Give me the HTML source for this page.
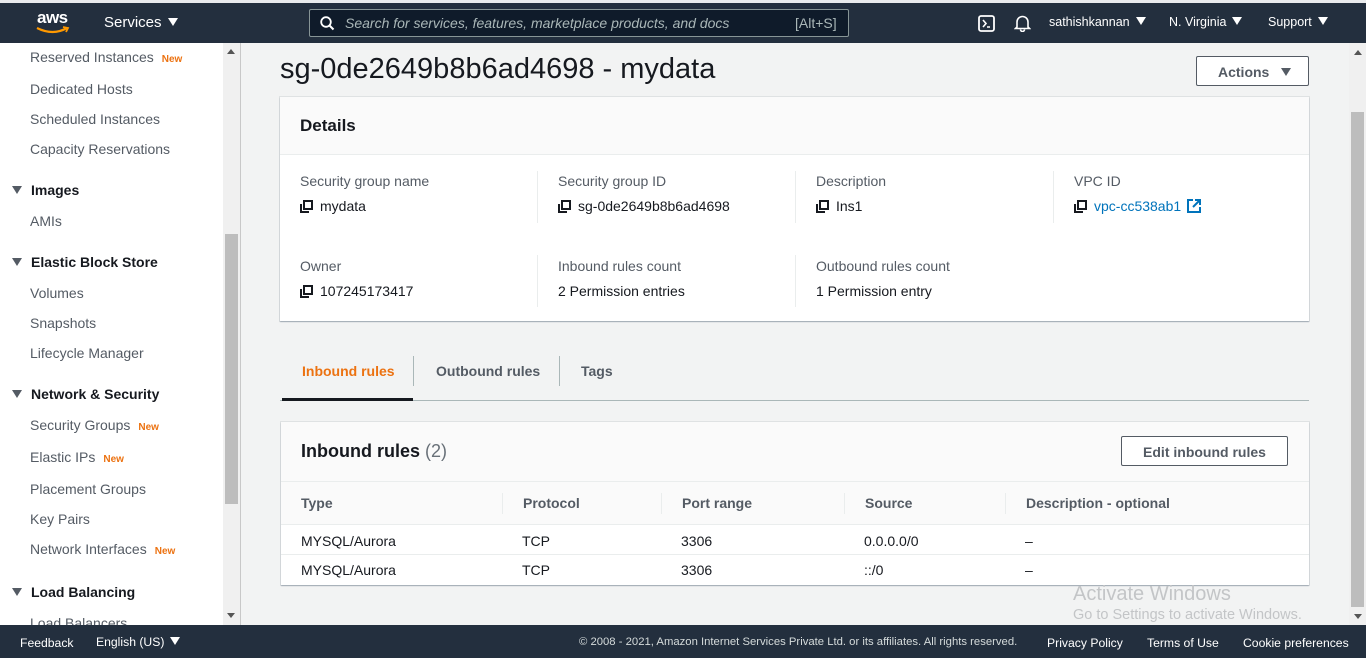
<!DOCTYPE html>
<html><head><meta charset="utf-8"><style>
*{margin:0;padding:0;box-sizing:border-box}
body{width:1366px;height:658px;overflow:hidden;background:#f2f3f3;font-family:"Liberation Sans",sans-serif;color:#16191f;position:relative;font-size:14px}
.a{position:absolute;white-space:nowrap}
.nav{left:0;top:3px;width:1366px;height:40px;background:#232f3e;color:#fff}
.top{left:0;top:0;width:1366px;height:3px;background:#e9ebed}
.side{left:0;top:43px;width:223px;height:582px;background:#fff;overflow:hidden}
.si{position:absolute;left:30px;color:#545b64;font-size:14px}
.sh{position:absolute;left:12px;font-weight:bold;color:#16191f;font-size:14px}
.sh:before{content:"";display:inline-block;border-left:5px solid transparent;border-right:5px solid transparent;border-top:8px solid #545b64;margin-right:9px;vertical-align:1px}
.new{color:#ec7211;font-size:10px;font-weight:bold;margin-left:8px}
.foot{left:0;top:625px;width:1366px;height:33px;background:#232f3e;color:#fff;font-size:12.2px}
.card{background:#fff;box-shadow:0 1px 1px rgba(0,31,63,.3),0 0 0 1px rgba(0,28,36,.08)}
.lbl{color:#545b64;font-size:14px}
.cp{display:inline-block;width:13px;height:13px;vertical-align:-2px;margin-right:7px}
.th{font-weight:bold;color:#545b64;font-size:14px}
.tri{display:inline-block;border-left:5px solid transparent;border-right:5px solid transparent;border-top:8px solid #fff;margin-left:6px;vertical-align:1px}
</style></head><body>
<div class="a top"></div>
<div class="a nav">
 <div class="a" style="left:37px;top:5px;font-size:17px;font-weight:bold;letter-spacing:-.5px">aws</div>
 <svg class="a" style="left:36px;top:23px" width="34" height="9" viewBox="0 0 34 9"><path d="M1 2Q17 10 31 2" stroke="#ff9900" stroke-width="2.2" fill="none"/><path d="M27 1L32 2L30 6" stroke="#ff9900" stroke-width="1.8" fill="none"/></svg>
 <div class="a" style="left:104px;top:11px;font-size:15px">Services<span class="tri"></span></div>
 <div class="a" style="left:309px;top:6px;width:540px;height:28px;border:1px solid #879596;border-radius:2px;background:#0f1b2a"></div>
 <svg class="a" style="left:320px;top:13px" width="15" height="15" viewBox="0 0 15 15"><circle cx="6" cy="6" r="4.8" stroke="#fff" stroke-width="1.8" fill="none"/><path d="M9.5 9.5L13.5 13.5" stroke="#fff" stroke-width="2"/></svg>
 <div class="a" style="left:345px;top:12px;font-size:14px;font-style:italic;color:#aab7b8">Search for services, features, marketplace products, and docs</div>
 <div class="a" style="left:795px;top:12px;font-size:14px;color:#aab7b8">[Alt+S]</div>
 <svg class="a" style="left:978px;top:12px" width="17" height="17" viewBox="0 0 17 17"><rect x="1" y="1" width="15" height="15" rx="2" stroke="#fff" stroke-width="1.8" fill="none"/><path d="M5 5L8 8.5L5 12M9 12H12" stroke="#fff" stroke-width="1.6" fill="none"/></svg>
 <svg class="a" style="left:1014px;top:11px" width="17" height="18" viewBox="0 0 17 18"><path d="M3 13V8a5.5 5.5 0 0 1 11 0v5l1.5 1.5h-14Z M6.5 15.5a2 2 0 0 0 4 0" stroke="#fff" stroke-width="1.6" fill="none"/></svg>
 <div class="a" style="left:1049px;top:12px;font-size:12.5px">sathishkannan<span class="tri"></span></div>
 <div class="a" style="left:1169px;top:12px;font-size:12.5px">N. Virginia<span class="tri"></span></div>
 <div class="a" style="left:1268px;top:12px;font-size:12.5px">Support<span class="tri"></span></div>
</div>

<div class="a side">
 <div class="si" style="top:6px">Reserved Instances<span class="new">New</span></div>
 <div class="si" style="top:38px">Dedicated Hosts</div>
 <div class="si" style="top:68px">Scheduled Instances</div>
 <div class="si" style="top:98px">Capacity Reservations</div>
 <div class="sh" style="top:139px">Images</div>
 <div class="si" style="top:170px">AMIs</div>
 <div class="sh" style="top:211px">Elastic Block Store</div>
 <div class="si" style="top:242px">Volumes</div>
 <div class="si" style="top:272px">Snapshots</div>
 <div class="si" style="top:302px">Lifecycle Manager</div>
 <div class="sh" style="top:343px">Network &amp; Security</div>
 <div class="si" style="top:374px">Security Groups<span class="new">New</span></div>
 <div class="si" style="top:406px">Elastic IPs<span class="new">New</span></div>
 <div class="si" style="top:438px">Placement Groups</div>
 <div class="si" style="top:468px">Key Pairs</div>
 <div class="si" style="top:498px">Network Interfaces<span class="new">New</span></div>
 <div class="sh" style="top:541px">Load Balancing</div>
 <div class="si" style="top:572px">Load Balancers</div>
</div>
<div class="a" style="left:223px;top:43px;width:17px;height:582px;background:#f0f0f0"></div>
<div class="a" style="left:225px;top:234px;width:13px;height:270px;background:#bdbdbd"></div>
<div class="a" style="left:227px;top:49px;border-left:4px solid transparent;border-right:4px solid transparent;border-bottom:5px solid #555"></div>
<div class="a" style="left:227px;top:613px;border-left:4px solid transparent;border-right:4px solid transparent;border-top:5px solid #555"></div>
<div class="a" style="left:240px;top:43px;width:1px;height:582px;background:#c8c8c8"></div>

<div class="a" style="left:1349px;top:43px;width:17px;height:582px;background:#f0f0f0"></div>
<div class="a" style="left:1351px;top:112px;width:13px;height:495px;background:#bdbdbd"></div>
<div class="a" style="left:1354px;top:50px;border-left:4px solid transparent;border-right:4px solid transparent;border-bottom:5px solid #555"></div>
<div class="a" style="left:1354px;top:614px;border-left:4px solid transparent;border-right:4px solid transparent;border-top:5px solid #555"></div>

<div class="a" style="left:280px;top:53px;font-size:29px;color:#16191f">sg-0de2649b8b6ad4698 - mydata</div>
<div class="a" style="left:1196px;top:56px;width:113px;height:30px;border:1px solid #545b64;border-radius:2px;background:#fff;font-weight:bold;color:#545b64;font-size:14px;padding:7px 0 0 21px">Actions<span class="tri" style="border-top-color:#545b64;margin-left:12px"></span></div>

<div class="a card" style="left:280px;top:97px;width:1029px;height:224px">
 <div style="height:58px;background:#fafafa;border-bottom:1px solid #eaeded;padding:19px 20px;font-size:17px;font-weight:bold">Details</div>
 <div class="a" style="left:257px;top:74px;width:1px;height:52px;background:#eaeded"></div>
 <div class="a" style="left:515px;top:74px;width:1px;height:52px;background:#eaeded"></div>
 <div class="a" style="left:773px;top:74px;width:1px;height:52px;background:#eaeded"></div>
 <div class="a" style="left:257px;top:158px;width:1px;height:52px;background:#eaeded"></div>
 <div class="a" style="left:515px;top:158px;width:1px;height:52px;background:#eaeded"></div>
 <div class="a lbl" style="left:20px;top:76px">Security group name</div>
 <div class="a" style="left:20px;top:101px"><svg class="cp" viewBox="0 0 13 13"><path d="M4 1H12V9H4Z M1 4V12H9" stroke="#16191f" stroke-width="2" fill="none"/></svg>mydata</div>
 <div class="a lbl" style="left:278px;top:76px">Security group ID</div>
 <div class="a" style="left:278px;top:101px"><svg class="cp" viewBox="0 0 13 13"><path d="M4 1H12V9H4Z M1 4V12H9" stroke="#16191f" stroke-width="2" fill="none"/></svg>sg-0de2649b8b6ad4698</div>
 <div class="a lbl" style="left:536px;top:76px">Description</div>
 <div class="a" style="left:536px;top:101px"><svg class="cp" viewBox="0 0 13 13"><path d="M4 1H12V9H4Z M1 4V12H9" stroke="#16191f" stroke-width="2" fill="none"/></svg>Ins1</div>
 <div class="a lbl" style="left:794px;top:76px">VPC ID</div>
 <div class="a" style="left:794px;top:101px;color:#0073bb"><svg class="cp" viewBox="0 0 13 13"><path d="M4 1H12V9H4Z M1 4V12H9" stroke="#16191f" stroke-width="2" fill="none"/></svg>vpc-cc538ab1 <svg style="vertical-align:-2px;margin-left:2px" width="14" height="14" viewBox="0 0 14 14"><path d="M6 1H1V13H13V8" stroke="#0073bb" stroke-width="2" fill="none"/><path d="M8 1H13V6M13 1L6 8" stroke="#0073bb" stroke-width="2" fill="none"/></svg></div>
 <div class="a lbl" style="left:20px;top:161px">Owner</div>
 <div class="a" style="left:20px;top:186px"><svg class="cp" viewBox="0 0 13 13"><path d="M4 1H12V9H4Z M1 4V12H9" stroke="#16191f" stroke-width="2" fill="none"/></svg>107245173417</div>
 <div class="a lbl" style="left:278px;top:161px">Inbound rules count</div>
 <div class="a" style="left:278px;top:186px">2 Permission entries</div>
 <div class="a lbl" style="left:536px;top:161px">Outbound rules count</div>
 <div class="a" style="left:536px;top:186px">1 Permission entry</div>
</div>

<div class="a" style="left:302px;top:363px;font-weight:bold;color:#ec7211">Inbound rules</div>
<div class="a" style="left:413px;top:356px;width:1px;height:30px;background:#aab7b8"></div>
<div class="a" style="left:436px;top:363px;font-weight:bold;color:#545b64">Outbound rules</div>
<div class="a" style="left:559px;top:356px;width:1px;height:30px;background:#aab7b8"></div>
<div class="a" style="left:581px;top:363px;font-weight:bold;color:#545b64">Tags</div>
<div class="a" style="left:280px;top:400px;width:1029px;height:1px;background:#aab7b8"></div>
<div class="a" style="left:282px;top:398px;width:131px;height:3px;background:#16191f"></div>

<div class="a card" style="left:281px;top:422px;width:1028px;height:163px;overflow:hidden">
 <div style="height:60px;background:#fafafa;border-bottom:1px solid #eaeded;padding:19px 20px;font-size:18px;font-weight:bold">Inbound rules <span style="font-weight:normal;color:#687078">(2)</span></div>
 <div class="a" style="left:840px;top:14px;width:167px;height:30px;border:1px solid #545b64;border-radius:2px;background:#fff;font-weight:bold;color:#545b64;text-align:center;padding-top:7px">Edit inbound rules</div>
 <div style="height:43px;background:#fafafa;border-bottom:1px solid #eaeded;position:relative">
  <div class="a th" style="left:20px;top:13px">Type</div>
  <div class="a" style="left:221px;top:11px;width:1px;height:21px;background:#eaeded"></div>
  <div class="a th" style="left:242px;top:13px">Protocol</div>
  <div class="a" style="left:380px;top:11px;width:1px;height:21px;background:#eaeded"></div>
  <div class="a th" style="left:401px;top:13px">Port range</div>
  <div class="a" style="left:563px;top:11px;width:1px;height:21px;background:#eaeded"></div>
  <div class="a th" style="left:584px;top:13px">Source</div>
  <div class="a" style="left:724px;top:11px;width:1px;height:21px;background:#eaeded"></div>
  <div class="a th" style="left:745px;top:13px">Description - optional</div>
 </div>
 <div style="height:30px;border-bottom:1px solid #eaeded;position:relative">
  <div class="a" style="left:20px;top:8px">MYSQL/Aurora</div><div class="a" style="left:241px;top:8px">TCP</div><div class="a" style="left:400px;top:8px">3306</div><div class="a" style="left:583px;top:8px">0.0.0.0/0</div><div class="a" style="left:744px;top:8px">–</div>
 </div>
 <div style="height:30px;position:relative">
  <div class="a" style="left:20px;top:7px">MYSQL/Aurora</div><div class="a" style="left:241px;top:7px">TCP</div><div class="a" style="left:400px;top:7px">3306</div><div class="a" style="left:583px;top:7px">::/0</div><div class="a" style="left:744px;top:7px">–</div>
 </div>
</div>

<div class="a" style="left:1073px;top:583px;font-size:20px;color:#c3c5c7">Activate Windows</div>
<div class="a" style="left:1073px;top:607px;font-size:14.5px;color:#c3c5c7">Go to Settings to activate Windows.</div>

<div class="a foot">
 <div class="a" style="left:20px;top:11px">Feedback</div>
 <div class="a" style="left:96px;top:10px">English (US)<span class="tri"></span></div>
 <div class="a" style="left:579px;top:11px;font-size:11.3px;color:#d5dbdb">© 2008 - 2021, Amazon Internet Services Private Ltd. or its affiliates. All rights reserved.</div>
 <div class="a" style="left:1047px;top:11px">Privacy Policy</div>
 <div class="a" style="left:1147px;top:11px">Terms of Use</div>
 <div class="a" style="left:1243px;top:11px">Cookie preferences</div>
</div>
</body></html>
